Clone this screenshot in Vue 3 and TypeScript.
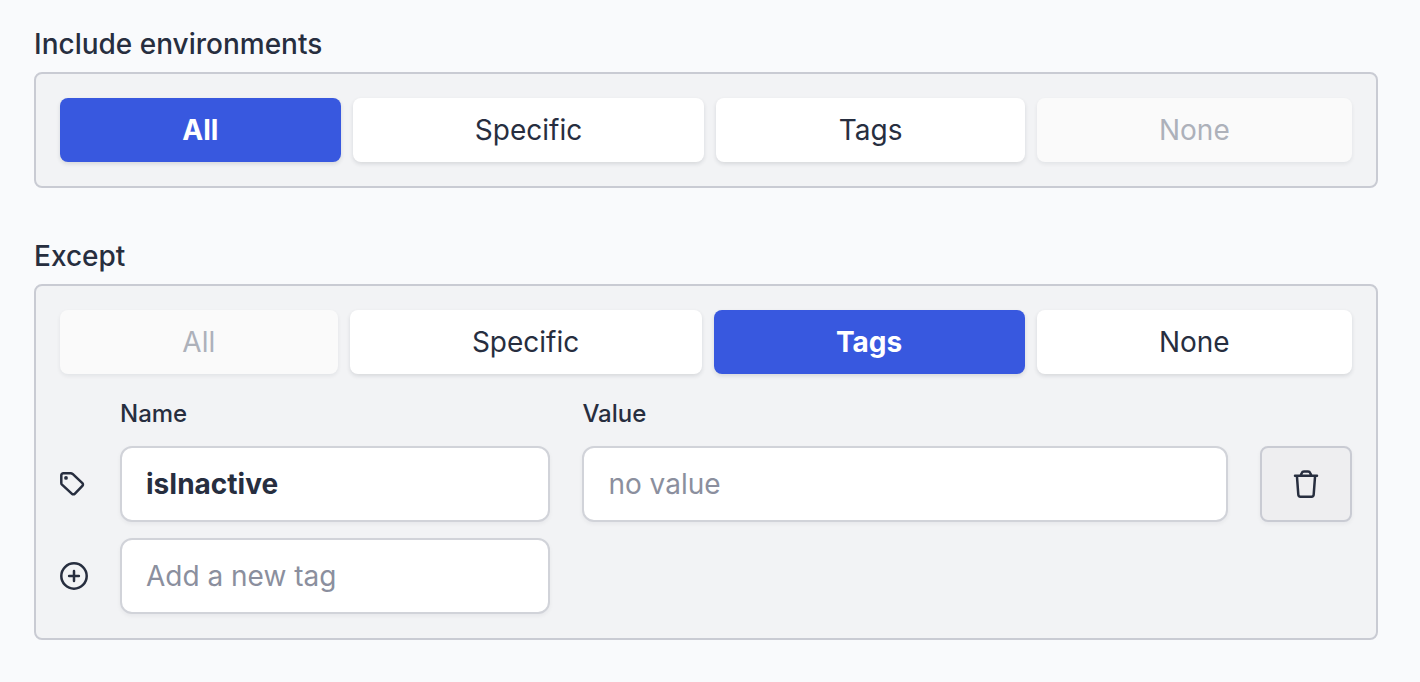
<script setup lang="ts">
import { ref } from 'vue'

type Mode = 'All' | 'Specific' | 'Tags' | 'None'

const modes: Mode[] = ['All', 'Specific', 'Tags', 'None']

const include = ref<Mode>('All')
const except = ref<Mode>('Tags')
const tagName = ref('isInactive')
const tagValue = ref('')
const newTag = ref('')

function clearTag(): void {
  tagName.value = ''
  tagValue.value = ''
}
</script>

<template>
  <main class="page">
    <section class="group" aria-labelledby="include-title">
      <h2 id="include-title" class="title">Include environments</h2>
      <div class="panel">
        <div class="modes">
          <button
            v-for="mode in modes"
            :key="mode"
            type="button"
            class="mode"
            :class="{ active: include === mode }"
            :aria-pressed="include === mode"
            :disabled="mode === 'None'"
            @click="include = mode"
          >{{ mode }}</button>
        </div>
      </div>
    </section>

    <section class="group" aria-labelledby="except-title">
      <h2 id="except-title" class="title">Except</h2>
      <div class="panel">
        <div class="modes">
          <button
            v-for="mode in modes"
            :key="mode"
            type="button"
            class="mode"
            :class="{ active: except === mode }"
            :aria-pressed="except === mode"
            :disabled="mode === 'All'"
            @click="except = mode"
          >{{ mode }}</button>
        </div>

        <div class="tags">
          <div class="row labels">
            <span></span>
            <label for="tag-name">Name</label>
            <label for="tag-value">Value</label>
          </div>
          <div class="row">
            <svg class="icon" viewBox="0 0 28 28" aria-hidden="true">
              <path d="M1.3 5.2a2 2 0 0 1 2-2h7.5c.7 0 1.3.3 1.8.7l9.8 9.2a1.9 1.9 0 0 1 0 2.7l-7.7 8a1.9 1.9 0 0 1-2.7 0L2 14.6a2.4 2.4 0 0 1-.7-1.7z" />
              <circle class="dot" cx="6" cy="7.9" r="1.9" />
            </svg>
            <input id="tag-name" v-model="tagName" class="field name" type="text" />
            <input id="tag-value" v-model="tagValue" class="field" type="text" placeholder="no value" />
            <button type="button" class="remove" aria-label="Remove tag" @click="clearTag">
              <svg class="icon" viewBox="0 0 28 28" aria-hidden="true">
                <path d="M4.9 5.7l1.4 18.8c.1 1.5.8 2.2 2.1 2.2h11.2c1.3 0 2-.7 2.1-2.2L23.1 5.7M3 5.7h22M8.6 5.5l1.2-2.6c.4-1 1.1-1.5 2.1-1.5h4.2c1 0 1.7.5 2.1 1.5l1.2 2.6" />
              </svg>
            </button>
          </div>
          <div class="row">
            <svg class="icon" viewBox="0 0 28 28" aria-hidden="true">
              <circle cx="14" cy="14" r="12.7" />
              <path d="M14 9.1v9.8M9.1 14h9.8" />
            </svg>
            <input v-model="newTag" class="field" type="text" placeholder="Add a new tag" aria-label="Add a new tag" />
          </div>
        </div>
      </div>
    </section>
  </main>
</template>

<style>
body {
  margin: 0;
  background: #f9fafc;
}
</style>

<style scoped>
.page {
  display: flex;
  flex-direction: column;
  gap: 48px;
  padding: 24px 42px 42px 34px;
  color: #272e3f;
  font-family: Inter, "Liberation Sans", sans-serif;
  font-size: 28px;
  line-height: 40px;
}

.group {
  display: flex;
  flex-direction: column;
  gap: 8px;
}

.title {
  margin: 0;
  font-size: 28px;
  font-weight: 500;
}

.panel {
  display: flex;
  flex-direction: column;
  gap: 24px;
  padding: 24px;
  border: 2px solid #c9cbd3;
  border-radius: 8px;
  background: #f2f3f5;
}

.modes {
  display: flex;
  gap: 12px;
}

.mode {
  flex: 1 1 auto;
  padding: 12px 16px;
  border: 0;
  border-radius: 8px;
  background: #fff;
  box-shadow: 0 2px 4px rgba(20, 24, 40, 0.12);
  color: inherit;
  font: inherit;
  cursor: pointer;
}

.mode.active {
  background: #3858df;
  color: #fff;
  font-weight: 700;
}

.mode:disabled {
  background: #fafafa;
  box-shadow: 0 2px 4px rgba(20, 24, 40, 0.07);
  color: #adb1ba;
  cursor: default;
}

.tags {
  display: flex;
  flex-direction: column;
  gap: 16px;
}

.row {
  display: grid;
  grid-template-columns: 28px 2fr 3fr 92px;
  column-gap: 32px;
  align-items: center;
}

.labels {
  font-size: 24px;
  font-weight: 500;
  line-height: 32px;
}

.field {
  box-sizing: border-box;
  width: 100%;
  min-width: 0;
  height: 76px;
  padding: 0 24px;
  border: 2px solid #d1d3d9;
  border-radius: 12px;
  background: #fff;
  box-shadow: 0 2px 4px rgba(20, 24, 40, 0.05);
  color: inherit;
  font: inherit;
}

.field::placeholder {
  color: #8b8f9e;
  opacity: 1;
}

.name {
  font-weight: 700;
}

.remove {
  display: flex;
  align-items: center;
  justify-content: center;
  height: 76px;
  padding: 0;
  border: 2px solid #c9cbd3;
  border-radius: 8px;
  background: #eeeef0;
  box-shadow: 0 2px 4px rgba(20, 24, 40, 0.05);
  color: inherit;
  cursor: pointer;
}

.icon {
  display: block;
  width: 28px;
  height: 28px;
  fill: none;
  stroke: currentColor;
  stroke-width: 2.5;
  stroke-linecap: round;
  stroke-linejoin: round;
}

.dot {
  fill: currentColor;
  stroke: none;
}
</style>
